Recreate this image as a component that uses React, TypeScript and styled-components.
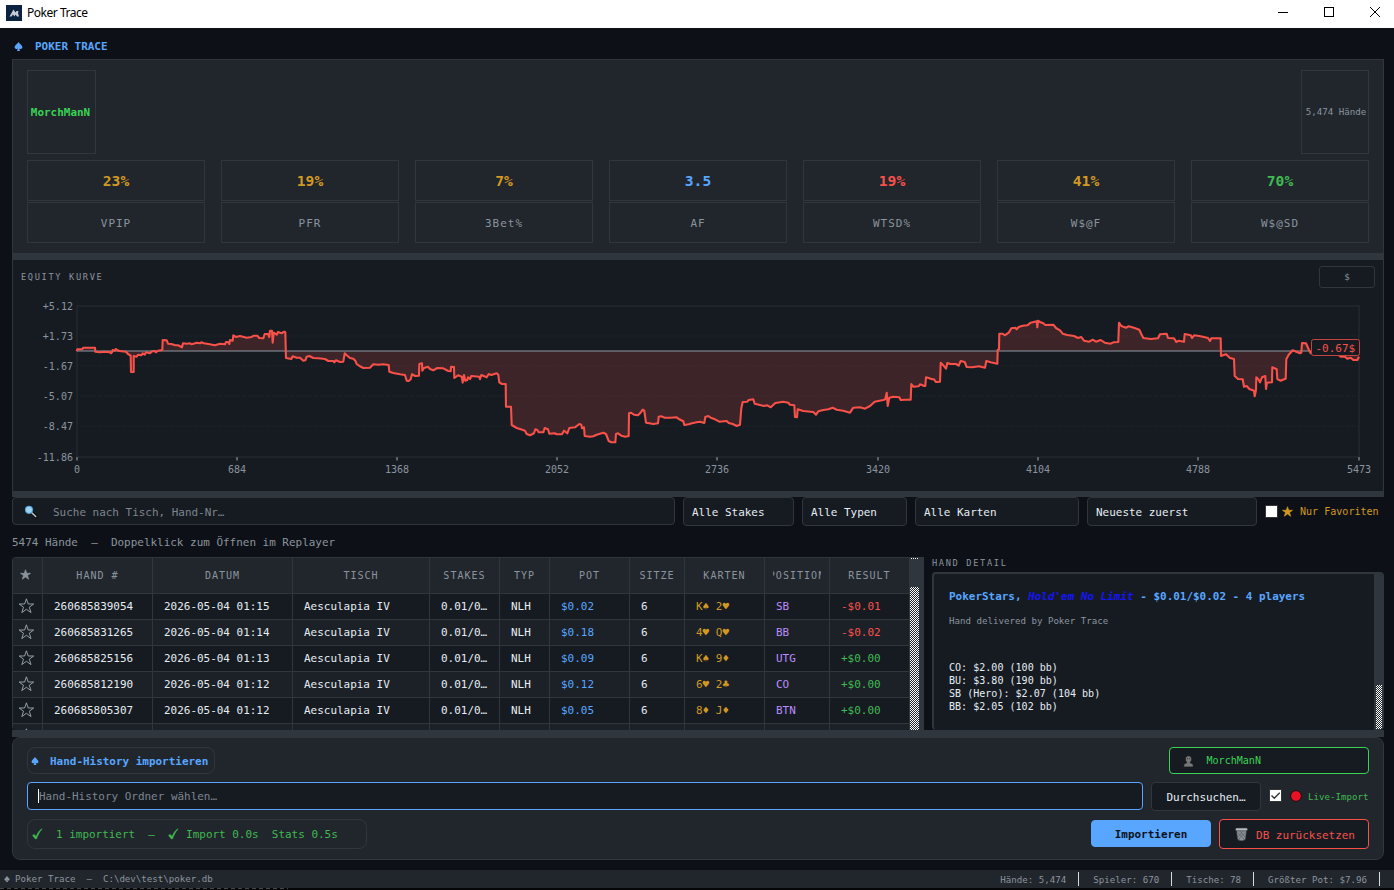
import React from 'react';
import styled, { createGlobalStyle, css } from 'styled-components';

const c = {
  bg: '#0d1117',
  panel: '#161b22',
  alt: '#1c2128',
  raised: '#21262d',
  line: '#30363d',
  muted: '#8b949e',
  text: '#e6edf3',
  blue: '#58a6ff',
  green: '#3fb950',
  lime: '#39d353',
  red: '#f85149',
  gold: '#d29922',
  purple: '#bc8cff',
};

/* Monospace text sized so that one character advances 0.55 * size pixels. */
const mono = (size: number) => css`
  font-family: 'DejaVu Sans Mono', monospace;
  font-size: ${(size * 0.9133).toFixed(2)}px;
`;

const GlobalStyle = createGlobalStyle`
  * { box-sizing: border-box; }
  body { margin: 0; background: ${c.bg}; overflow: hidden; }
`;

const Window = styled.div`
  width: 1394px;
  height: 890px;
  display: flex;
  flex-direction: column;
  overflow: hidden;
  background: ${c.bg};
  color: ${c.text};
  white-space: pre;
  line-height: 1;
  ${mono(12)}
`;

const TitleBar = styled.header`
  flex: none;
  height: 28px;
  display: flex;
  align-items: center;
  padding: 0 13px 2px 6px;
  background: #fff;
  color: #000;
  font-family: 'Noto Sans', sans-serif;
  font-size: 12px;
  letter-spacing: -0.47px;
`;
const TitleText = styled.span`
  flex: 1;
  margin-left: 5px;
`;
const WindowControls = styled.div`
  display: flex;
  gap: 34px;
  svg { display: block; }
`;

const Content = styled.main`
  flex: none;
  height: 842px;
  padding: 0 10px 0 12px;
`;
const AppHeading = styled.h1`
  margin: 0;
  height: 31px;
  padding: 7px 0 0 2px;
  display: flex;
  align-items: center;
  gap: 12px;
  color: ${c.blue};
  font-weight: bold;
  ${mono(12)}
  svg { margin-top: -2px; }
`;

const StatsPanel = styled.section`
  height: 194px;
  padding: 10px 14px 0;
  background: ${c.raised};
  border: 1px solid ${c.line};
  border-bottom: 0;
`;
const StatsTop = styled.div`
  display: flex;
  justify-content: space-between;
  margin-bottom: 6px;
`;
const NameBox = styled.div<{ $w: number; $color: string; $size: number; $bold?: boolean }>`
  width: ${(p) => p.$w}px;
  height: 84px;
  display: flex;
  align-items: center;
  justify-content: center;
  padding-top: 2px;
  border: 1px solid ${c.line};
  color: ${(p) => p.$color};
  font-weight: ${(p) => (p.$bold ? 'bold' : 'normal')};
  ${(p) => mono(p.$size)}
`;
const PlayerBox = styled(NameBox)`
  padding-right: 2px;
`;
const HandsBox = styled(NameBox)`
  padding-left: 2px;
`;
const StatGrid = styled.div`
  display: grid;
  grid-template-columns: repeat(7, 178px);
  column-gap: 16px;
`;
const StatBox = styled.div`
  height: 41px;
  display: flex;
  align-items: center;
  justify-content: center;
  padding-top: 3px;
  border: 1px solid ${c.line};
`;
const StatValue = styled(StatBox)<{ $color: string }>`
  margin-bottom: 1px;
  padding-top: 2px;
  color: ${(p) => p.$color};
  font-weight: bold;
  ${mono(16)}
`;
const StatLabel = styled(StatBox)`
  color: ${c.muted};
  letter-spacing: 1px;
  ${mono(12)}
`;

const Splitter = styled.div<{ $h: number }>`
  height: ${(p) => p.$h}px;
  background: ${c.line};
`;

const ChartPanel = styled.section`
  height: 231px;
  background: ${c.panel};
  border: solid ${c.line};
  border-width: 0 1px;
  svg { display: block; }
`;
const ChartHeader = styled.div`
  display: flex;
  justify-content: space-between;
  padding: 6px 8px 0;
`;
const SectionLabel = styled.div`
  color: ${c.muted};
  letter-spacing: 1.65px;
  ${mono(9.5)}
`;
const ChartTitle = styled(SectionLabel)`
  display: flex;
  align-items: center;
`;
const UnitButton = styled.button`
  width: 56px;
  height: 22px;
  padding: 0;
  background: ${c.panel};
  border: 1px solid ${c.line};
  border-radius: 3px;
  color: ${c.muted};
  ${mono(10)}
`;
const AxisText = styled.text`
  fill: ${c.muted};
  ${mono(11)}
`;
const BadgeText = styled.text`
  fill: ${c.red};
  ${mono(12)}
`;

const FilterBar = styled.div`
  height: 29px;
  display: flex;
  align-items: flex-start;
  gap: 8px;
`;
const SearchBox = styled.div`
  width: 663px;
  height: 28px;
  display: flex;
  align-items: center;
  padding: 4px 0 0 11px;
  gap: 15px;
  background: ${c.panel};
  border: 1px solid ${c.line};
  border-radius: 4px;
  color: #7d858e;
  svg { margin-top: -3px; }
`;
const Select = styled.div<{ $w: number }>`
  width: ${(p) => p.$w}px;
  height: 29px;
  display: flex;
  align-items: center;
  padding: 3px 8px 0;
  background: ${c.panel};
  border: 1px solid ${c.line};
  border-radius: 4px;
`;
const CheckLabel = styled.label<{ $color: string; $size: number }>`
  display: flex;
  align-items: center;
  height: 28px;
  color: ${(p) => p.$color};
  ${(p) => mono(p.$size)}
  svg { flex: none; }
`;
const CheckText = styled.span<{ $drop?: number }>`
  padding-top: ${(p) => p.$drop ?? 2}px;
`;
const Box = styled.span`
  flex: none;
  width: 13px;
  height: 13px;
  display: flex;
  background: #fff;
  border: 1px solid #333;
`;
const Gap = styled.span<{ $w: number }>`
  flex: none;
  width: ${(p) => p.$w}px;
`;

const CountLine = styled.div`
  height: 31px;
  display: flex;
  align-items: center;
  padding-top: 3px;
  color: ${c.muted};
`;

const Split = styled.div`
  height: 173px;
  display: flex;
`;
const Table = styled.div`
  width: 898px;
  overflow: hidden;
  border: solid ${c.line};
  border-width: 1px 0 0 1px;
  border-radius: 4px 0 0 4px;
`;
const Row = styled.div<{ $alt?: boolean }>`
  height: 26px;
  display: grid;
  grid-template-columns: 30px 110px 140px 137px 70px 50px 80px 55px 80px 65px 80px;
  background: ${(p) => (p.$alt ? c.alt : c.panel)};
`;
const HeadRow = styled(Row)`
  height: 36px;
  background: ${c.raised};
`;
const Cell = styled.div<{ $color?: string }>`
  display: flex;
  align-items: center;
  padding: 2px 0 0 11px;
  overflow: hidden;
  border: solid ${c.line};
  border-width: 0 1px 1px 0;
  color: ${(p) => p.$color ?? c.text};
`;
const StarCell = styled(Cell)`
  padding: 0 0 0 5px;
  svg { margin-top: -2px; }
`;
const HeadCell = styled(Cell)`
  justify-content: center;
  padding: 0 8px;
  color: ${c.muted};
  letter-spacing: 1px;
  ${mono(11)}
`;
const HeadClip = styled.span`
  display: flex;
  justify-content: center;
  min-width: 0;
  overflow: hidden;
  line-height: 16px;
`;
const checker = css`
  background: conic-gradient(#fff 25%, #22272e 0 50%, #fff 0 75%, #22272e 0) 0 0 / 2px 2px;
`;
const TableScroll = styled.div`
  width: 9px;
  display: flex;
  flex-direction: column;
  justify-content: space-between;
  padding-top: 1px;
  background: ${c.line};
  &::before { content: ''; height: 1px; ${checker} }
  &::after { content: ''; height: 143px; ${checker} }
`;
const VerticalSplitter = styled.div`
  width: 5px;
  margin-right: 8px;
  background: ${c.line};
`;
const Detail = styled.section`
  flex: 1;
  padding-top: 2px;
`;
const DetailLabel = styled(SectionLabel)`
  height: 13px;
  display: flex;
  align-items: center;
  padding-bottom: 4px;
`;
const DetailBox = styled.div`
  height: 158px;
  display: flex;
  overflow: hidden;
  background: ${c.panel};
  border: 2px solid ${c.line};
  border-width: 2px 2px 0 2px;
  border-radius: 4px;
`;
const DetailBody = styled.div`
  flex: 1;
  padding: 17px 0 0 15px;
`;
const DetailTitle = styled.div`
  height: 13px;
  display: flex;
  align-items: center;
  color: ${c.blue};
  font-weight: bold;
  em { color: #1414f5; }
`;
const DetailNote = styled.div`
  margin: 11px 0 33px;
  height: 13px;
  line-height: 13px;
  color: ${c.muted};
  ${mono(10)}
`;
const SeatLine = styled.div`
  height: 13px;
  line-height: 13px;
  ${mono(11)}
`;
const DetailScroll = styled.div`
  width: 8px;
  padding: 111px 0 0 2px;
  background: ${c.line};
  &::after { content: ''; display: block; height: 44px; ${checker} }
`;

const ImportPanel = styled.section`
  height: 123px;
  padding: 9px 14px 0;
  display: grid;
  grid-template-rows: 27px 31px 31px;
  row-gap: 7px;
  background: ${c.raised};
  border: 1px solid ${c.line};
  border-radius: 8px;
`;
const Line = styled.div`
  display: flex;
  justify-content: space-between;
  align-items: flex-start;
`;
const Pill = styled.div<{ $w: number; $h: number; $color: string; $bold?: boolean }>`
  width: ${(p) => p.$w}px;
  height: ${(p) => p.$h}px;
  display: flex;
  align-items: center;
  padding: 3px 0 0 3px;
  border: 1px solid ${c.line};
  border-radius: 8px;
  color: ${(p) => p.$color};
  font-weight: ${(p) => (p.$bold ? 'bold' : 'normal')};
  svg { flex: none; margin-top: -3px; }
`;
const PlayerSelect = styled.div`
  width: 200px;
  height: 27px;
  display: flex;
  align-items: center;
  padding: 1px 0 0 13px;
  gap: 12.5px;
  background: ${c.panel};
  border: 1px solid ${c.lime};
  border-radius: 4px;
  color: ${c.lime};
  ${mono(11)}
`;
const FolderInput = styled.div`
  width: 1116px;
  height: 28px;
  margin-top: 1px;
  display: flex;
  align-items: center;
  padding: 3px 0 0 10px;
  background: ${c.panel};
  border: 1px solid ${c.blue};
  border-radius: 4px;
  color: #7d858e;
`;
const Caret = styled.span`
  width: 1px;
  height: 14px;
  margin-top: -3px;
  background: #fff;
`;
const Button = styled.button<{ $w: number; $h: number; $bg: string; $fg: string; $edge: string }>`
  width: ${(p) => p.$w}px;
  height: ${(p) => p.$h}px;
  display: flex;
  align-items: center;
  justify-content: center;
  padding: 2px 0 0;
  background: ${(p) => p.$bg};
  border: 1px solid ${(p) => p.$edge};
  border-radius: 4px;
  color: ${(p) => p.$fg};
  white-space: pre;
  ${mono(12)}
`;
const BrowseButton = styled(Button)`
  margin: 1px 0 0 8px;
`;
const ImportButton = styled(Button)`
  margin: 1px 8px 0 auto;
  font-weight: bold;
`;
const ResetButton = styled(Button)`
  padding-left: 2px;
  svg { margin-top: -2px; }
`;
const LiveLabel = styled(CheckLabel)`
  margin: 0 0 0 8px;
  flex: 1;
`;

const StatusBar = styled.footer`
  flex: none;
  height: 18px;
  display: flex;
  align-items: center;
  padding-left: 4px;
  background: ${c.raised};
  color: ${c.muted};
  ${mono(10)}
`;
const StatusPath = styled.span`
  flex: 1;
  margin-left: 5px;
  padding-top: 2px;
`;
const StatusItem = styled.span`
  height: 14px;
  display: flex;
  align-items: center;
  margin-right: 14px;
  padding: 3px 12px 0 0;
  border-right: 1px solid #d8dadd;
`;
const Edge = styled.div`
  flex: none;
  height: 2px;
  background: #050607;
  &::before {
    content: '';
    display: block;
    width: 288px;
    height: 1px;
    background: repeating-linear-gradient(90deg, #45484c 0 4px, transparent 4px 7px);
  }
`;

const Spade = ({ size = 9, color }: { size?: number; color: string }) => (
  <svg width={size} height={size} viewBox="0 0 9 9" fill={color}>
    <path d="M4.5 0C5.2 1.6 8.4 3.3 8.4 5.3c0 1.7-2 2.2-3.2 1.1L6 9H3l.8-2.6C2.600 7.500.6 7 .6 5.300.6 3.300 3.800 1.600 4.500 0z" />
  </svg>
);
const STAR = 'M8 0.800 9.800 6H15.300L10.900 9.200 12.600 14.600 8 11.300 3.400 14.600 5.100 9.200 0.700 6H6.200z';
const SolidStar = ({ size, color }: { size: number; color: string }) => (
  <svg width={size} height={size} viewBox="0 0 16 15.500" fill={color} stroke={color} strokeWidth="1"><path d={STAR} /></svg>
);
const OutlineStar = () => (
  <svg width="16" height="16" viewBox="-.4 0 16 16" fill="none" stroke="#a3abb4" strokeWidth="0.9"><path d={STAR} /></svg>
);
const Check = () => (
  <svg width="11" height="12" viewBox="0 0 11 12" fill={c.green} stroke={c.green} strokeWidth=".4">
    <path d="M.5 7.500 2.200 6.300 4 8.600C5.500 5 7.300 2.300 9.700.700L10 1.200C7.600 3.900 5.900 7 4.500 11H3.300z" />
  </svg>
);
const Magnifier = () => (
  <svg width="14" height="14" viewBox="0 0 14 14">
    <path d="M7.800 7.600 12 11.700" stroke="#0a0a0a" strokeWidth="3.400" strokeLinecap="round" />
    <path d="M7.500 7.500 11.700 11.500" stroke="#b9bec4" strokeWidth="1.700" strokeLinecap="round" />
    <circle cx="5" cy="4.800" r="3.700" fill="#9bd3f5" stroke="#4d9fdc" />
  </svg>
);
const Person = () => (
  <svg width="11" height="13" viewBox="0 0 12 14" fill="#777" stroke="#161616" strokeWidth=".8">
    <path d="M.8 13V11.300C.8 9.300 3 8.600 4.500 8.300 3.200 7.500 2.500 6 2.500 4.400 2.500 2.200 4 .8 6 .8s3.500 1.400 3.500 3.600c0 1.600-.7 3.100-2 3.900 1.500.3 3.700 1 3.700 3V13z" />
    <path d="M4.500 4h1M6.700 4h1" fill="none" />
  </svg>
);
const Trash = () => (
  <svg width="13" height="15" viewBox="0 0 13 15">
    <path d="M1.300 3h10.400L10.500 12.500Q6.500 15.500 2.500 12.500z" fill="#899196" stroke="#2a2d30" strokeWidth=".7" />
    <path d="M3 5.500l6.500 7M5.500 4.500l5 6M10 5.500l-6.500 7M7.500 4.500l-5 6" stroke="#555c61" strokeWidth=".7" />
    <rect x=".5" y="1" width="12" height="2.800" rx="1.200" fill="#b8bec2" stroke="#30343a" strokeWidth=".6" />
  </svg>
);

/* Equity samples in thirds of a pixel, split in three runs by horizontal origin. */
const runs: Array<[number, string]> = [
  [0, '230,184 232,178 246,178 250,173 285,173 286,185 300,187 312,185 330,187 333,190 336,187 338,180 344,182 347,177 350,179 358,183 378,185 384,192 392,197 393,246 401,246 401,198 410,200 414,194 424,196 428,190 434,194 438,187 450,190 456,184 464,183 468,187 474,182 487,180 488,150 500,151 504,161 514,162 526,166 534,166 546,172 549,160 560,161 570,160 575,163 585,160 590,158 600,160 604,157 612,160 625,162 645,166 660,161 675,163 678,156 684,156 688,162 690,150 698,152 700,136 708,141 720,138 740,143 755,141 760,137 772,137 778,144 790,145 794,132 804,132 808,141 810,122 816,122 818,158 821,128 830,134 834,126 845,130 852,125 856,127 858,204 874,207 878,199 890,203 900,203 910,212 916,211 920,200 928,198 940,204 955,205 975,207 985,213 1000,213 1003,217 1008,211 1020,216 1030,215 1034,190 1040,196 1050,204 1060,206 1066,212 1070,222 1080,229 1090,234 1110,233 1120,223 1135,224 1150,223 1166,225 1168,245 1180,249 1200,253 1215,255 1220,272 1226,273 1232,268 1236,253 1246,258 1257,257 1258,222 1266,220 1267,242 1272,234 1284,230 1290,237 1300,241 1312,234 1330,235 1345,243 1352,244 1353,230 1362,231 1363,264 1374,256'],
  [460, '0,258 5,260 8,278 12,255 16,272 22,270 24,262 30,267 34,258 58,260 60,268 64,255 80,262 86,252 94,255 110,250 115,254 118,277 126,282 137,282 138,350 153,350 155,405 170,414 182,418 195,422 200,432 210,436 222,430 226,418 232,420 236,427 250,427 254,414 264,418 268,431 284,430 290,433 306,433 312,422 318,427 322,430 328,414 345,412 358,402 364,404 366,415 372,412 374,438 390,440 400,439 410,434 430,428 438,432 446,453 454,457 466,457 468,432 474,430 484,437 496,440 506,438 507,370 512,368 522,374 534,376 540,370 548,359 553,362 558,398 568,400 580,402 594,400 596,380 604,379 614,383 630,383 650,382 658,388 670,394 673,405 686,403 696,400 710,397 720,395 733,399 736,381 745,378 752,383 765,388 778,395 800,393 806,399 818,402 830,408 840,404 844,355 848,336 862,335 866,330 880,328 884,341 900,345 912,348 922,346 932,352 946,339 970,335 985,338 990,344 1003,346 1005,381 1011,382 1013,358 1030,363 1060,366 1068,374 1075,364 1090,360 1105,358 1118,353 1130,359 1150,362 1170,368 1180,353 1200,352 1215,356 1230,348 1244,335 1270,330 1276,328 1280,308 1283,348 1288,323 1300,320 1318,322 1322,330 1335,329 1352,329 1354,282 1360,290 1376,289 1380,283 1391,287'],
  [924, '0,288 4,288 6,262 14,264 24,268 30,268 36,276 48,275 50,218 56,224 66,236 70,219 80,222 96,222 104,227 110,213 122,216 128,231 145,232 165,229 183,233 187,213 200,217 220,221 221,180 225,178 226,131 236,131 242,136 254,128 262,115 274,113 278,118 284,111 296,107 310,106 320,98 338,94 340,112 342,92 348,96 358,100 364,105 388,104 396,114 408,121 416,131 430,135 450,138 462,144 472,141 480,152 496,155 506,149 516,155 530,150 542,158 560,161 568,157 583,156 585,98 592,108 606,113 614,109 632,114 646,119 652,132 658,144 680,147 702,145 708,133 728,131 732,144 750,145 757,156 764,152 780,155 782,132 800,136 804,144 810,136 826,138 840,141 852,144 858,153 862,145 890,145 891,198 906,193 918,204 930,207 932,258 942,267 956,268 960,290 968,288 976,297 990,302 992,319 996,300 997,262 1002,266 1008,277 1014,262 1024,258 1026,297 1029,278 1044,277 1045,232 1058,238 1060,267 1070,272 1080,268 1085,266 1087,208 1094,194 1106,181 1128,190 1132,188 1134,159 1146,160 1155,180 1160,190 1200,185 1240,192 1250,200 1262,200 1270,206 1280,203 1288,210 1300,210 1305,200'],
];
const curve = runs
  .flatMap(([origin, pts]) =>
    pts.split(' ').map((p) => {
      const [x, y] = p.split(',').map(Number);
      return `${(origin + x / 3).toFixed(1)},${(290 + y / 3).toFixed(1)}`;
    }),
  )
  .join(' ');

const yTicks: Array<[string, number]> = [
  ['+5.12', 306], ['+1.73', 336], ['-1.67', 366], ['-5.07', 396], ['-8.47', 426], ['-11.86', 457],
];
const xTicks: Array<[string, number]> = [
  ['0', 77], ['684', 237], ['1368', 397], ['2052', 557], ['2736', 717], ['3420', 878], ['4104', 1038], ['4788', 1198], ['5473', 1359],
];

const EquityChart = () => (
  <svg width="1370" height="203" viewBox="13 288 1370 203">
    {yTicks.slice(1, 5).map(([t, y]) => (
      <line key={t} x1="77" x2="1359" y1={y} y2={y} stroke="#242930" strokeDasharray="1 2" />
    ))}
    <rect x="77" y="306" width="1282" height="151" fill="none" stroke="#1f242b" strokeWidth="2" />
    <polygon points={`77,351 ${curve} 1359,351`} fill={c.red} fillOpacity="0.17" />
    <line x1="77" x2="1359" y1="351" y2="351" stroke="#8b949e" strokeOpacity="0.52" strokeWidth="2" />
    <polyline points={curve} fill="none" stroke={c.red} strokeWidth="2.1" strokeLinejoin="round" />
    {yTicks.map(([t, y]) => (
      <AxisText key={t} x="73" y={y + 4} textAnchor="end">{t}</AxisText>
    ))}
    {xTicks.map(([t, x]) => (
      <g key={t}>
        <line x1={x} x2={x} y1="457" y2="460.500" stroke="#5a6169" strokeWidth="2" />
        <AxisText x={x} y="473" textAnchor="middle">{t}</AxisText>
      </g>
    ))}
    <rect x="1311.500" y="339.500" width="48" height="16" rx="2" fill={c.panel} stroke="#c4443f" />
    <BadgeText x="1315.500" y="352">-0.67$</BadgeText>
  </svg>
);

const stats: Array<[string, string, string]> = [
  ['23%', 'VPIP', c.gold], ['19%', 'PFR', c.gold], ['7%', '3Bet%', c.gold], ['3.5', 'AF', c.blue],
  ['19%', 'WTSD%', c.red], ['41%', 'W$@F', c.gold], ['70%', 'W$@SD', c.green],
];
const heads = ['HAND #', 'DATUM', 'TISCH', 'STAKES', 'TYP', 'POT', 'SITZE', 'KARTEN', 'POSITION', 'RESULT'];
const hands = [
  ['260685839054', '01:15', '$0.02', 'K♠ 2♥', 'SB', '-$0.01'],
  ['260685831265', '01:14', '$0.18', '4♥ Q♥', 'BB', '-$0.02'],
  ['260685825156', '01:13', '$0.09', 'K♠ 9♦', 'UTG', '+$0.00'],
  ['260685812190', '01:12', '$0.12', '6♥ 2♣', 'CO', '+$0.00'],
  ['260685805307', '01:12', '$0.05', '8♦ J♦', 'BTN', '+$0.00'],
];
const seats = ['CO: $2.00 (100 bb)', 'BU: $3.80 (190 bb)', 'SB (Hero): $2.07 (104 bb)', 'BB: $2.05 (102 bb)'];
const totals = ['Hände: 5,474', 'Spieler: 670', 'Tische: 78', 'Größter Pot: $7.96'];

export default function App() {
  return (
    <>
      <GlobalStyle />
      <Window>
        <TitleBar>
          <svg width="16" height="16" viewBox="0 0 16 16">
            <rect width="16" height="16" fill="#0b2240" />
            <path d="M3.500 11.500 7.500 4.500 9.500 7.500l1-1.500h2l-.5 2 1 3.500h-2L9.500 9.500 8.500 11.500 7 9.500l-1.500 2z" fill="#c9ced6" />
          </svg>
          <TitleText>Poker Trace</TitleText>
          <WindowControls>
            <svg width="12" height="12" viewBox="0 0 12 12"><path d="M1 5.500h10" stroke="#000" /></svg>
            <svg width="12" height="12" viewBox="0 0 12 12"><rect x="1.500" y=".5" width="9" height="9" fill="none" stroke="#000" /></svg>
            <svg width="12" height="12" viewBox="0 0 12 12"><path d="M1 0l10 10M11 0 1 10" stroke="#000" /></svg>
          </WindowControls>
        </TitleBar>

        <Content>
          <AppHeading><Spade color={c.blue} />POKER TRACE</AppHeading>
          <StatsPanel>
            <StatsTop>
              <PlayerBox $w={69} $color={c.lime} $size={12} $bold>MorchManN</PlayerBox>
              <HandsBox $w={68} $color={c.muted} $size={10}>5,474 Hände</HandsBox>
            </StatsTop>
            <StatGrid>
              {stats.map(([value, label, color]) => (
                <div key={label}>
                  <StatValue $color={color}>{value}</StatValue>
                  <StatLabel>{label}</StatLabel>
                </div>
              ))}
            </StatGrid>
          </StatsPanel>
          <Splitter $h={7} />
          <ChartPanel>
            <ChartHeader>
              <ChartTitle>EQUITY KURVE</ChartTitle>
              <UnitButton>$</UnitButton>
            </ChartHeader>
            <EquityChart />
          </ChartPanel>
          <Splitter $h={6} />

          <FilterBar>
            <SearchBox><Magnifier />Suche nach Tisch, Hand-Nr…</SearchBox>
            <Select $w={111}>Alle Stakes</Select>
            <Select $w={105}>Alle Typen</Select>
            <Select $w={164}>Alle Karten</Select>
            <Select $w={170}>Neueste zuerst</Select>
            <CheckLabel $color={c.gold} $size={11}>
              <Box /><Gap $w={4} /><SolidStar size={11} color={c.gold} /><Gap $w={7} /><CheckText>Nur Favoriten</CheckText>
            </CheckLabel>
          </FilterBar>
          <CountLine>5474 Hände  –  Doppelklick zum Öffnen im Replayer</CountLine>

          <Split>
            <Table>
              <HeadRow>
                <StarCell><Gap $w={2} /><SolidStar size={11} color={c.muted} /></StarCell>
                {heads.map((h) => <HeadCell key={h}><HeadClip>{h}</HeadClip></HeadCell>)}
              </HeadRow>
              {hands.map(([id, time, pot, cards, pos, result], i) => (
                <Row key={id} $alt={i % 2 === 1}>
                  <StarCell><OutlineStar /></StarCell>
                  <Cell>{id}</Cell>
                  <Cell>2026-05-04 {time}</Cell>
                  <Cell>Aesculapia IV</Cell>
                  <Cell>0.01/0…</Cell>
                  <Cell>NLH</Cell>
                  <Cell $color={c.blue}>{pot}</Cell>
                  <Cell>6</Cell>
                  <Cell $color={c.gold}>{cards}</Cell>
                  <Cell $color={c.purple}>{pos}</Cell>
                  <Cell $color={result[0] === '-' ? c.red : c.green}>{result}</Cell>
                </Row>
              ))}
              <Row $alt>
                <StarCell><OutlineStar /></StarCell>
                {heads.map((h) => <Cell key={h} />)}
              </Row>
            </Table>
            <TableScroll />
            <VerticalSplitter />
            <Detail>
              <DetailLabel>HAND DETAIL</DetailLabel>
              <DetailBox>
                <DetailBody>
                  <DetailTitle>PokerStars, <em>Hold'em No Limit</em> - $0.01/$0.02 - 4 players</DetailTitle>
                  <DetailNote>Hand delivered by Poker Trace</DetailNote>
                  {seats.map((s) => <SeatLine key={s}>{s}</SeatLine>)}
                </DetailBody>
                <DetailScroll />
              </DetailBox>
            </Detail>
          </Split>
          <Splitter $h={7} />

          <ImportPanel>
            <Line>
              <Pill $w={188} $h={27} $color={c.blue} $bold>
                <Spade size={8} color={c.blue} /><Gap $w={11} />Hand-History importieren
              </Pill>
              <PlayerSelect><Person />MorchManN</PlayerSelect>
            </Line>
            <Line>
              <FolderInput><Caret />Hand-History Ordner wählen…</FolderInput>
              <BrowseButton $w={110} $h={29} $bg={c.panel} $fg={c.text} $edge={c.line}>Durchsuchen…</BrowseButton>
              <LiveLabel $color={c.green} $size={10}>
                <Box>
                  <svg width="11" height="11" viewBox="0 0 11 11"><path d="M1.500 5.500 4.300 8.300 9.700 2.700" fill="none" stroke="#333" strokeWidth="1.400" /></svg>
                </Box>
                <Gap $w={8} />
                <svg width="12" height="13" viewBox="0 0 12 13"><circle cx="6" cy="7" r="5.400" fill="#e81224" stroke="#111" /></svg>
                <Gap $w={6} /><CheckText $drop={5}>Live-Import</CheckText>
              </LiveLabel>
            </Line>
            <Line>
              <Pill $w={340} $h={30} $color={c.green}>
                <Gap $w={1} /><Check /><Gap $w={13} />1 importiert  –  <Check /><Gap $w={7} />Import 0.0s  Stats 0.5s
              </Pill>
              <ImportButton $w={120} $h={27} $bg={c.blue} $fg={c.bg} $edge={c.blue}>Importieren</ImportButton>
              <ResetButton $w={150} $h={30} $bg={c.panel} $fg={c.red} $edge={c.red}><Trash /><Gap $w={8} />DB zurücksetzen</ResetButton>
            </Line>
          </ImportPanel>
        </Content>

        <StatusBar>
          <Spade size={6} color={c.muted} />
          <StatusPath>Poker Trace  –  C:\dev\test\poker.db</StatusPath>
          {totals.map((t) => <StatusItem key={t}>{t}</StatusItem>)}
        </StatusBar>
        <Edge />
      </Window>
    </>
  );
}
